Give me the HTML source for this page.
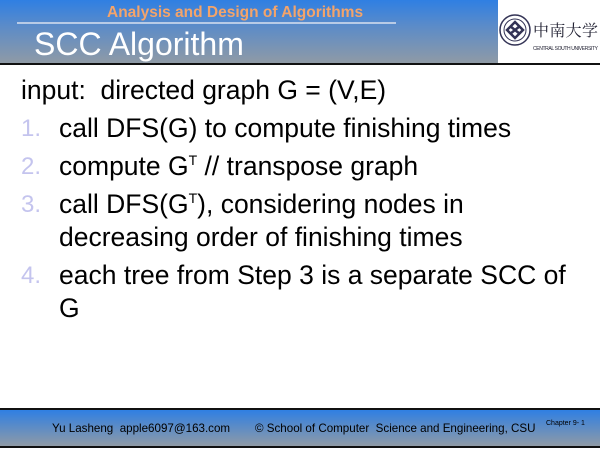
<!DOCTYPE html>
<html><head><meta charset="utf-8"><style>
body{margin:0;width:600px;height:450px;position:relative;background:#fff;font-family:"Liberation Sans",Arial,sans-serif;overflow:hidden}
.hdr{position:absolute;left:0;top:0;width:600px;height:63px;background:linear-gradient(#2f7fe3,#5a8bc9 40%,#8f9aa6)}
.hline{position:absolute;left:0;top:63px;width:600px;height:2px;background:#111}
.sub{position:absolute;left:107px;top:4px;color:#f4a46a;font-weight:bold;font-size:15.5px;white-space:nowrap}
.rule{position:absolute;left:17px;top:22px;width:379px;height:2px;background:#b8cbe6}
.title{position:absolute;left:34px;top:26px;color:#fff;font-size:32px;white-space:nowrap}
.logo{position:absolute;left:498px;top:0;width:102px;height:63px;background:#fff}
.body{position:absolute;left:21px;top:74px;font-size:26.5px;color:#000;white-space:nowrap}
.body div{line-height:33px;margin-bottom:5px}
.it{position:relative;padding-left:38px}
.n{position:absolute;left:0;color:#c4c4ee;font-size:24px}
sup{font-size:14px;vertical-align:0;position:relative;top:-10px;line-height:0}
.ftr{position:absolute;left:0;top:408px;width:600px;height:40px;background:linear-gradient(#2f7fe3,#8f9aa6);border-top:2px solid #111;border-bottom:2px solid #111;box-sizing:border-box}
.f{position:absolute;top:422px;font-size:11.6px;color:#000;white-space:nowrap}
</style></head><body>
<div class="hdr"></div><div class="hline"></div>
<div class="sub">Analysis and Design of Algorithms</div>
<div class="rule"></div>
<div class="title">SCC Algorithm</div>
<div class="logo">
<svg width="102" height="63" viewBox="0 0 102 63">
<circle cx="17" cy="30" r="15" fill="none" stroke="#335" stroke-width="1.5"/>
<circle cx="17" cy="30" r="11" fill="none" stroke="#335" stroke-width="1"/>
<path d="M9 30 L17 22 L25 30 L17 38 Z M12 26 L22 34 M12 34 L22 26" fill="none" stroke="#335" stroke-width="2.5"/>
<text x="35" y="36" font-family="Noto Serif CJK SC,serif" font-size="16" fill="#223" textLength="65">中南大学</text>
<text x="35" y="50" font-size="5" fill="#223" textLength="65">CENTRAL SOUTH UNIVERSITY</text>
</svg></div>
<div class="body">
<div>input:&nbsp; directed graph G = (V,E)</div>
<div class="it"><span class="n">1.</span>call DFS(G) to compute finishing times</div>
<div class="it"><span class="n">2.</span>compute G<sup>T</sup> // transpose graph</div>
<div class="it"><span class="n">3.</span>call DFS(G<sup>T</sup>), considering nodes in<br>decreasing order of finishing times</div>
<div class="it"><span class="n">4.</span>each tree from Step 3 is a separate SCC of<br>G</div>
</div>
<div class="ftr"></div>
<div class="f" style="left:52px">Yu Lasheng&nbsp; apple6097@163.com</div>
<div class="f" style="left:255px">© School of Computer&nbsp; Science and Engineering, CSU</div>
<div class="f" style="left:546px;top:420px;font-size:7px">Chapter 9- 1</div>
</body></html>
